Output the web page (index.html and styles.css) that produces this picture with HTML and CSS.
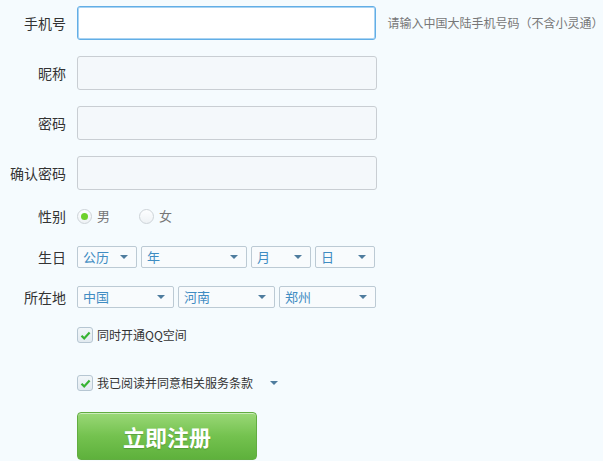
FILE: index.html
```html
<!DOCTYPE html>
<html lang="zh-CN">
<head>
<meta charset="utf-8">
<title>注册</title>
<link rel="stylesheet" href="styles.css">
</head>
<body>
<form class="reg">
  <div class="row row-first">
    <label class="lbl">手机号</label>
    <div class="field focus"></div>
    <span class="hint">请输入中国大陆手机号码（不含小灵通）</span>
  </div>
  <div class="row row-input">
    <label class="lbl">昵称</label>
    <div class="field"></div>
  </div>
  <div class="row row-input">
    <label class="lbl">密码</label>
    <div class="field"></div>
  </div>
  <div class="row row-input">
    <label class="lbl">确认密码</label>
    <div class="field"></div>
  </div>
  <div class="row row-gender">
    <label class="lbl">性别</label>
    <span class="radio on"></span><span class="opt">男</span>
    <span class="radio off"></span><span class="opt">女</span>
  </div>
  <div class="row row-birth">
    <label class="lbl">生日</label>
    <div class="sels">
      <div class="sel w60"><span>公历</span><i class="tri"></i></div>
      <div class="sel w106"><span>年</span><i class="tri"></i></div>
      <div class="sel w60"><span>月</span><i class="tri"></i></div>
      <div class="sel w60"><span>日</span><i class="tri"></i></div>
    </div>
  </div>
  <div class="row row-loc">
    <label class="lbl">所在地</label>
    <div class="sels">
      <div class="sel w97"><span>中国</span><i class="tri"></i></div>
      <div class="sel w97"><span>河南</span><i class="tri"></i></div>
      <div class="sel w97"><span>郑州</span><i class="tri"></i></div>
    </div>
  </div>
  <div class="row row-chk1 indent">
    <span class="chk"><svg width="13" height="13" viewBox="0 0 13 13"><path d="M2.5 6.8 L5.2 9.4 L10.6 3.6" fill="none" stroke="#37b332" stroke-width="2.2"/></svg></span>
    <span class="chk-text">同时开通QQ空间</span>
  </div>
  <div class="row row-chk2 indent">
    <span class="chk"><svg width="13" height="13" viewBox="0 0 13 13"><path d="M2.5 6.8 L5.2 9.4 L10.6 3.6" fill="none" stroke="#37b332" stroke-width="2.2"/></svg></span>
    <span class="chk-text">我已阅读并同意相关服务条款</span>
    <i class="tri tri-terms"></i>
  </div>
  <div class="row row-btn indent">
    <button type="button" class="btn">立即注册</button>
  </div>
</form>
</body>
</html>
```
FILE: styles.css
```css
* { box-sizing: border-box; }
html, body {
  margin: 0;
  padding: 0;
  background: #f5fbfe;
}
body {
  font-family: "Noto Sans CJK SC", "Liberation Sans", sans-serif;
  color: #333;
  width: 603px;
  height: 461px;
  overflow: hidden;
}
.reg { display: flex; flex-direction: column; }
.row { display: flex; align-items: center; }
.lbl {
  width: 66px;
  margin-right: 11px;
  text-align: right;
  font-size: 14px;
  line-height: 20px;
  color: #333;
  flex: none;
}
.indent { padding-left: 77px; }

.row-first { margin-top: 6px; }
.row-input { margin-top: 16px; }
.field {
  width: 300px;
  height: 34px;
  border: 1px solid #c9ced3;
  border-radius: 3px;
  background: #f4f8fb;
}
.field.focus {
  border: 1px solid #62aee6;
  background: #fff;
  box-shadow: 0 0 0 1px #a9d3f2 inset;
}
.hint {
  margin-left: 11px;
  font-size: 12px;
  color: #777;
  line-height: 16px;
}

.row-gender { margin-top: 15px; height: 22px; }
.radio {
  width: 15px;
  height: 15px;
  border-radius: 50%;
  border: 1px solid #cdd3d8;
  background: linear-gradient(#fdfeff, #eef2f5);
  position: relative;
  flex: none;
}
.radio.on::after {
  content: "";
  position: absolute;
  left: 3px;
  top: 3px;
  width: 7px;
  height: 7px;
  border-radius: 50%;
  background: #6ed12b;
}
.opt {
  margin-left: 5px;
  font-size: 13px;
  color: #777;
  line-height: 16px;
}
.opt:nth-of-type(2) { margin-right: 29px; }

.row-birth { margin-top: 19px; }
.row-loc { margin-top: 18px; }
.sels { display: flex; gap: 4px; }
.sel {
  height: 22px;
  border: 1px solid #bccad4;
  border-radius: 2px;
  background: #f8fbfd;
  display: flex;
  align-items: center;
  justify-content: space-between;
  padding: 0 8px 0 5px;
  font-size: 13px;
  color: #3f8cc2;
  line-height: 16px;
}
.w60 { width: 60px; }
.w106 { width: 106px; }
.w97 { width: 97px; }
.tri {
  display: inline-block;
  width: 0;
  height: 0;
  border-left: 4px solid transparent;
  border-right: 4px solid transparent;
  border-top: 4px solid #4e7c9e;
}

.row-chk1 { margin-top: 17px; height: 20px; }
.row-chk2 { margin-top: 28px; height: 20px; }
.chk {
  width: 16px;
  height: 16px;
  border: 1px solid #b6c6d2;
  border-radius: 3px;
  background: linear-gradient(#f1f6f9, #e2eaf0);
  display: flex;
  align-items: center;
  justify-content: center;
  flex: none;
}
.chk-text {
  margin-left: 4px;
  font-size: 12px;
  color: #333;
  line-height: 16px;
}
.tri-terms { margin-left: 17px; }

.row-btn { margin-top: 19px; }
.btn {
  width: 180px;
  height: 48px;
  border: 1px solid #62ad41;
  border-radius: 4px;
  background: linear-gradient(#9ad877, #74c24f 50%, #5eb13c);
  color: #fff;
  font-family: "Noto Sans CJK SC", sans-serif;
  font-size: 22px;
  font-weight: bold;
  padding: 0;
  box-shadow: 0 1px 0 rgba(255,255,255,0.5) inset;
  text-shadow: 0 1px 1px rgba(40,100,20,0.35);
}
```
